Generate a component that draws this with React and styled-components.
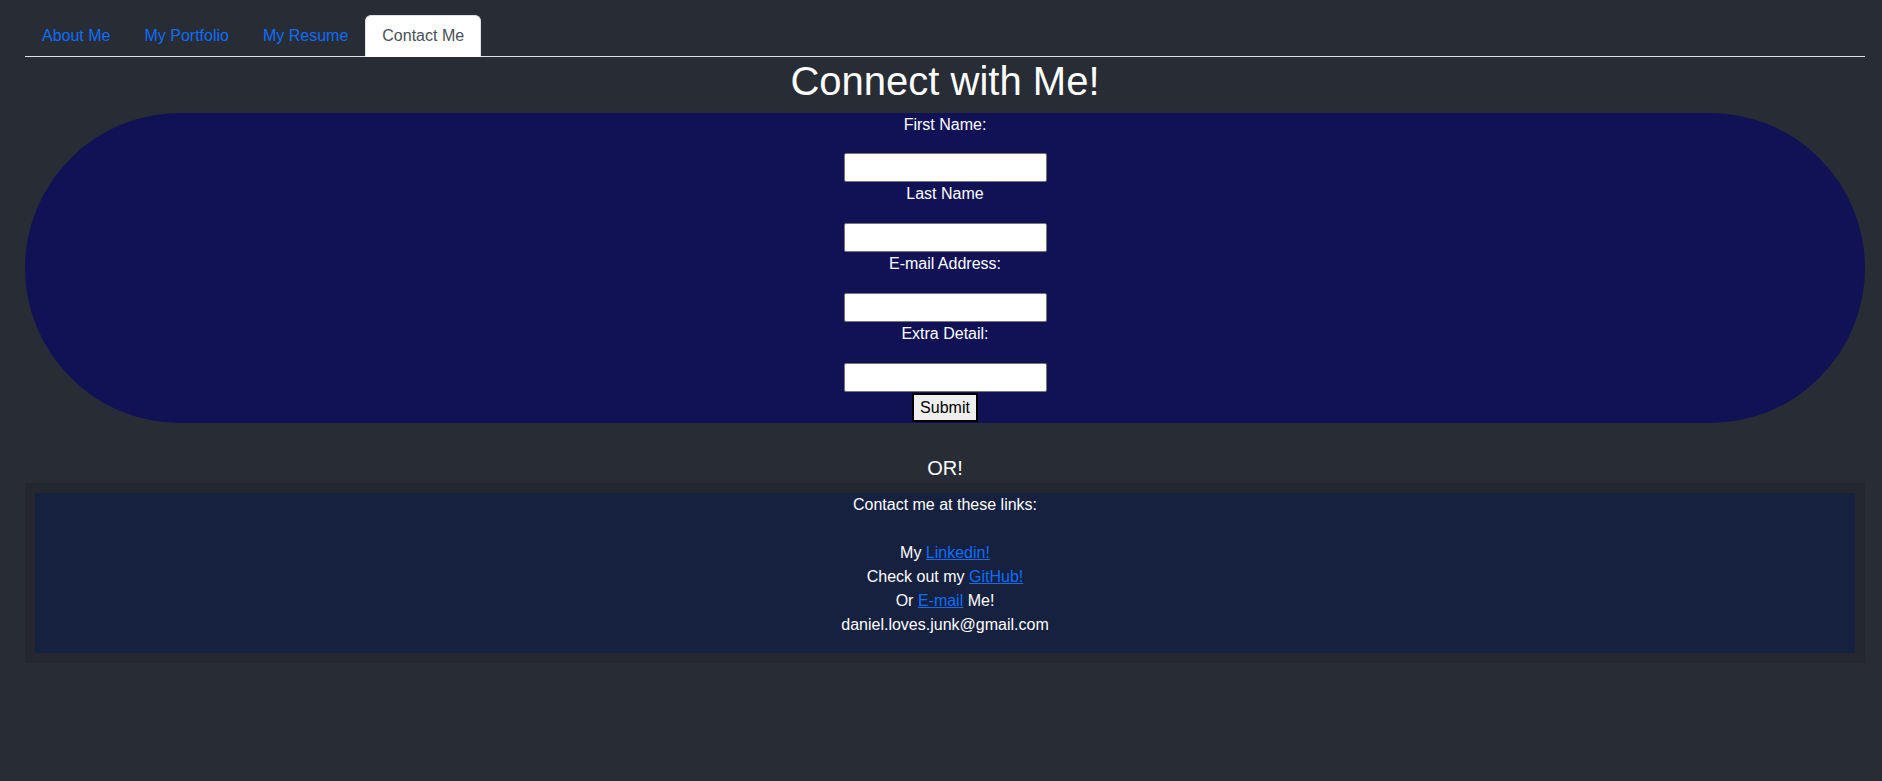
import React from "react";
import styled, { createGlobalStyle } from "styled-components";

const GlobalStyle = createGlobalStyle`
  html, body {
    margin: 0;
    min-height: 100%;
    background: #282c34;
  }
  body {
    font-family: "Liberation Sans", Arial, sans-serif;
    font-size: 16px;
    line-height: 24px;
    color: #fff;
  }
`;

const Page = styled.div`
  padding: 15px 17px 0 25px;
  min-height: 766px;
`;

const TabBar = styled.ul`
  display: flex;
  list-style: none;
  margin: 0;
  padding: 0;
  border-bottom: 1px solid #dee2e6;
`;

const Tab = styled.a`
  display: block;
  margin-bottom: -1px;
  padding: 8px 16px;
  border: 1px solid transparent;
  border-radius: 6px 6px 0 0;
  color: #0d6efd;
  text-decoration: none;
  cursor: pointer;

  ${(p) =>
    p.$active &&
    `
    color: #495057;
    background: #fff;
    border-color: #dee2e6 #dee2e6 #fff;
  `}
`;

const Title = styled.h1`
  margin: 0 0 8px;
  font-size: 40px;
  line-height: 48px;
  font-weight: 400;
  text-align: center;
`;

const Form = styled.form`
  display: flex;
  flex-direction: column;
  align-items: center;
  padding-bottom: 1px;
  background: #111256;
  border-radius: 9999px;
`;

const Label = styled.label`
  display: block;
  margin-bottom: 17px;

  &:first-of-type {
    margin-bottom: 16px;
  }
`;

const Input = styled.input`
  box-sizing: border-box;
  width: 203px;
  height: 29px;
  margin: 0;
  border: 1px solid #767676;
  border-radius: 2px;
  background: #fff;
  font: inherit;
`;

const Submit = styled.button`
  box-sizing: border-box;
  width: 66px;
  height: 29px;
  margin: 1px 0 0;
  padding: 0;
  border: 2px solid #000;
  background: #efefef;
  color: #000;
  font: inherit;
`;

const Or = styled.h5`
  margin: 33px 0 3px;
  font-size: 20px;
  line-height: 24px;
  font-weight: 400;
  text-align: center;
`;

const ContactFrame = styled.div`
  padding: 10px;
  background: #24272e;
`;

const ContactCard = styled.div`
  background: #15213f;
  text-align: center;
  padding-bottom: 16px;
`;

const Line = styled.div`
  margin-bottom: ${(p) => p.$gap || 0}px;
`;

const Link = styled.a`
  color: #0d6efd;
  text-decoration: underline;
`;

const tabs = ["About Me", "My Portfolio", "My Resume", "Contact Me"];
const fields = ["First Name:", "Last Name", "E-mail Address:", "Extra Detail:"];

export default function App() {
  return (
    <>
      <GlobalStyle />
      <Page>
        <TabBar>
          {tabs.map((t) => (
            <li key={t}>
              <Tab $active={t === "Contact Me"}>{t}</Tab>
            </li>
          ))}
        </TabBar>

        <Title>Connect with Me!</Title>

        <Form onSubmit={(e) => e.preventDefault()}>
          {fields.map((f) => (
            <React.Fragment key={f}>
              <Label>{f}</Label>
              <Input type="text" />
            </React.Fragment>
          ))}
          <Submit type="submit">Submit</Submit>
        </Form>

        <Or>OR!</Or>

        <ContactFrame>
          <ContactCard>
            <Line $gap={24}>Contact me at these links:</Line>
            <Line>
              My <Link href="#">Linkedin!</Link>
            </Line>
            <Line>
              Check out my <Link href="#">GitHub!</Link>
            </Line>
            <Line>
              Or <Link href="#">E-mail</Link> Me!
            </Line>
            <Line>daniel.loves.junk@gmail.com</Line>
          </ContactCard>
        </ContactFrame>
      </Page>
    </>
  );
}
